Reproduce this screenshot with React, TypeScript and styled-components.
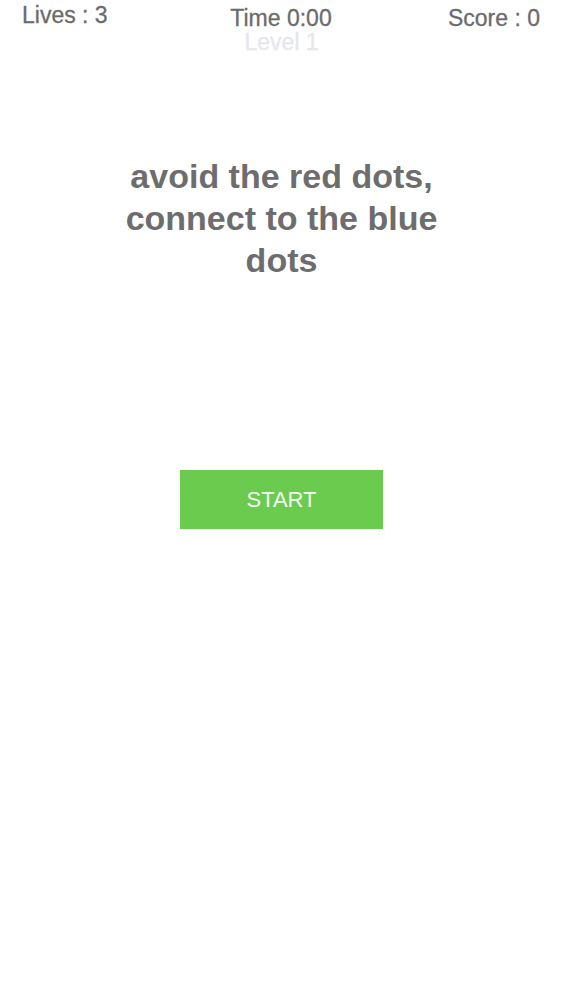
import styled, { createGlobalStyle } from 'styled-components';

const Global = createGlobalStyle`
  html, body {
    margin: 0;
    padding: 0;
    background: #ffffff;
  }
  body {
    font-family: "Liberation Sans", Arial, sans-serif;
  }
`;

const Screen = styled.div`
  width: 563px;
  height: 1000px;
  display: flex;
  flex-direction: column;
  align-items: center;
  background: #fff;
`;

const Header = styled.div`
  width: 100%;
  box-sizing: border-box;
  display: grid;
  grid-template-columns: 1fr auto 1fr;
  padding: 3px 23px 0 22px;
`;

const Stat = styled.div<{ $align: 'left' | 'center' | 'right'; $top: number }>`
  font-size: 23px;
  line-height: 24px;
  color: #6b6b6b;
  -webkit-text-stroke: 0.3px #6b6b6b;
  text-align: ${(p) => p.$align};
  padding-top: ${(p) => p.$top}px;
`;

const Level = styled.div`
  font-size: 23px;
  line-height: 24px;
  color: #e6e6ed;
  -webkit-text-stroke: 0.3px #e6e6ed;
`;

const Message = styled.h1`
  margin: 101px 0 0;
  width: 340px;
  text-align: center;
  font-size: 34px;
  line-height: 42px;
  font-weight: 700;
  color: #6d6d6d;
`;

const StartButton = styled.button`
  margin-top: 189px;
  width: 203px;
  height: 59px;
  border: 0;
  border-radius: 0;
  padding: 0;
  background: #6acb4f;
  color: #f4fbf1;
  font-family: "Liberation Sans", Arial, sans-serif;
  font-size: 22px;
  cursor: pointer;
`;

export default function App() {
  return (
    <>
      <Global />
      <Screen>
        <Header>
          <Stat $align="left" $top={0}>Lives : 3</Stat>
          <Stat $align="center" $top={3}>Time 0:00</Stat>
          <Stat $align="right" $top={3}>Score : 0</Stat>
        </Header>
        <Level>Level 1</Level>
        <Message>avoid the red dots, connect to the blue dots</Message>
        <StartButton>START</StartButton>
      </Screen>
    </>
  );
}
